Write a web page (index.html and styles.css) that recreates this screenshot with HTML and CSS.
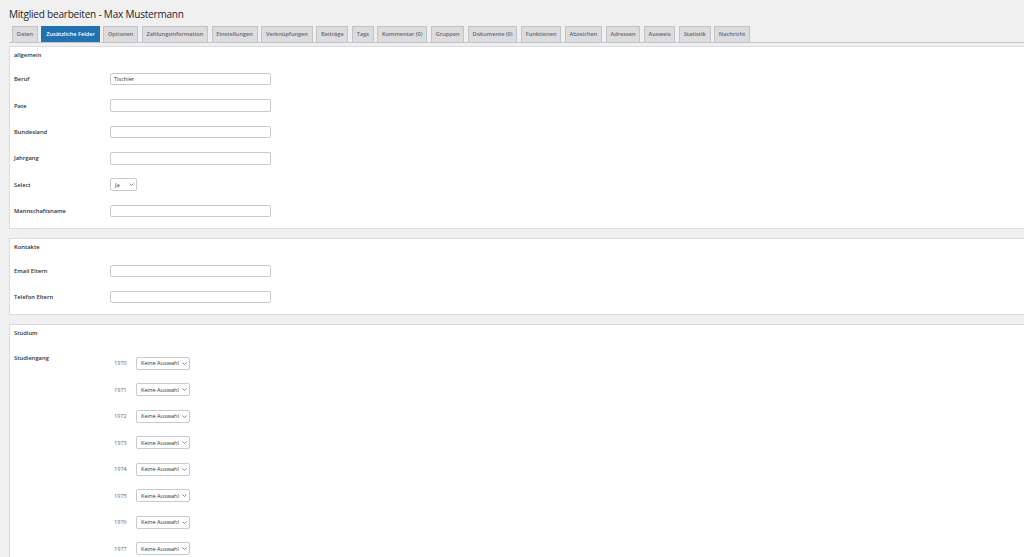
FILE: index.html
```html
<!DOCTYPE html>
<html lang="de">
<head>
<meta charset="utf-8">
<title>Mitglied bearbeiten</title>
<link rel="stylesheet" href="styles.css">
</head>
<body>
<div class="wrap">
  <h1 class="title">Mitglied bearbeiten - Max Mustermann</h1>
  <nav class="tabs">
    <a class="tab">Daten</a>
    <a class="tab active">Zusätzliche Felder</a>
    <a class="tab">Optionen</a>
    <a class="tab">Zahlungsinformation</a>
    <a class="tab">Einstellungen</a>
    <a class="tab">Verknüpfungen</a>
    <a class="tab">Beiträge</a>
    <a class="tab">Tags</a>
    <a class="tab">Kommentar (0)</a>
    <a class="tab">Gruppen</a>
    <a class="tab">Dokumente (0)</a>
    <a class="tab">Funktionen</a>
    <a class="tab">Abzeichen</a>
    <a class="tab">Adressen</a>
    <a class="tab">Ausweis</a>
    <a class="tab">Statistik</a>
    <a class="tab">Nachricht</a>
  </nav>

  <section class="panel">
    <h2 class="panel-title">allgemein</h2>
    <div class="rows">
      <div class="row"><span class="label">Beruf</span><div class="input">Tischler</div></div>
      <div class="row"><span class="label">Pate</span><div class="input"></div></div>
      <div class="row"><span class="label">Bundesland</span><div class="input"></div></div>
      <div class="row"><span class="label">Jahrgang</span><div class="input"></div></div>
      <div class="row"><span class="label">Select</span><div class="select select-small"><span>Ja</span><svg class="chev" viewBox="0 0 10 6"><path d="M1 1l4 4 4-4"/></svg></div></div>
      <div class="row"><span class="label">Mannschaftsname</span><div class="input"></div></div>
    </div>
  </section>

  <section class="panel">
    <h2 class="panel-title">Kontakte</h2>
    <div class="rows">
      <div class="row"><span class="label">Email Eltern</span><div class="input"></div></div>
      <div class="row"><span class="label">Telefon Eltern</span><div class="input"></div></div>
    </div>
  </section>

  <section class="panel panel-last">
    <h2 class="panel-title">Studium</h2>
    <div class="rows">
      <div class="row-top">
        <span class="label label-top">Studiengang</span>
        <div class="years">
          <div class="year-row"><span class="year">1970</span><div class="select select-wide"><span>Keine Auswahl</span><svg class="chev" viewBox="0 0 10 6"><path d="M1 1l4 4 4-4"/></svg></div></div>
          <div class="year-row"><span class="year">1971</span><div class="select select-wide"><span>Keine Auswahl</span><svg class="chev" viewBox="0 0 10 6"><path d="M1 1l4 4 4-4"/></svg></div></div>
          <div class="year-row"><span class="year">1972</span><div class="select select-wide"><span>Keine Auswahl</span><svg class="chev" viewBox="0 0 10 6"><path d="M1 1l4 4 4-4"/></svg></div></div>
          <div class="year-row"><span class="year">1973</span><div class="select select-wide"><span>Keine Auswahl</span><svg class="chev" viewBox="0 0 10 6"><path d="M1 1l4 4 4-4"/></svg></div></div>
          <div class="year-row"><span class="year">1974</span><div class="select select-wide"><span>Keine Auswahl</span><svg class="chev" viewBox="0 0 10 6"><path d="M1 1l4 4 4-4"/></svg></div></div>
          <div class="year-row"><span class="year">1975</span><div class="select select-wide"><span>Keine Auswahl</span><svg class="chev" viewBox="0 0 10 6"><path d="M1 1l4 4 4-4"/></svg></div></div>
          <div class="year-row"><span class="year">1976</span><div class="select select-wide"><span>Keine Auswahl</span><svg class="chev" viewBox="0 0 10 6"><path d="M1 1l4 4 4-4"/></svg></div></div>
          <div class="year-row"><span class="year">1977</span><div class="select select-wide"><span>Keine Auswahl</span><svg class="chev" viewBox="0 0 10 6"><path d="M1 1l4 4 4-4"/></svg></div></div>
        </div>
      </div>
    </div>
  </section>
</div>
</body>
</html>
```

FILE: styles.css
```css
html, body {
  margin: 0;
  padding: 0;
  background: #f0f0f0;
}
body {
  width: 1024px;
  height: 557px;
  overflow: hidden;
  font-family: "Open Sans", "Noto Sans", sans-serif;
  color: #1d2327;
}
.wrap {
  padding-left: 9px;
}
.title {
  margin: 0;
  padding-top: 7px;
  height: 14px;
  line-height: 14px;
  font-size: 10px;
  letter-spacing: -0.2px;
  font-weight: 400;
  color: #1d2327;
}
.tabs {
  display: flex;
  gap: 3.5px;
  margin-top: 4.5px;
  padding-left: 3px;
  border-bottom: 1px solid #c3c4c7;
}
.tab {
  box-sizing: border-box;
  height: 16px;
  line-height: 15px;
  padding: 0 3.8px;
  border: 1px solid #c3c4c7;
  border-bottom: none;
  background: #dcdcde;
  color: #646970;
  font-size: 5.6px;
  font-weight: 600;
  white-space: nowrap;
}
.tab.active {
  background: #2271b1;
  border-color: #2271b1;
  color: #fff;
}
.panel {
  background: #fff;
  border: 1px solid #dcdcde;
  border-right: none;
  margin-top: 3.5px;
  padding: 3px 0 4px 4px;
}
.panel + .panel {
  margin-top: 8.3px;
}
.panel-title {
  margin: 0;
  font-size: 5.8px;
  font-weight: 600;
  line-height: 10px;
  color: #2c3338;
}
.rows {
  margin-top: 6px;
}
.row {
  display: flex;
  align-items: center;
  height: 26.4px;
}
.label {
  width: 96px;
  flex: none;
  font-size: 5.8px;
  font-weight: 600;
  color: #2c3338;
}
.input {
  box-sizing: border-box;
  width: 161px;
  height: 12.5px;
  border: 1px solid #c8cacd;
  border-radius: 2px;
  padding: 0 3px;
  font-size: 5.6px;
  line-height: 10.5px;
  color: #2c3338;
}
.select {
  box-sizing: border-box;
  display: flex;
  align-items: center;
  justify-content: space-between;
  height: 13px;
  border: 1px solid #c8cacd;
  border-radius: 2px;
  padding: 0 2.5px 0 4px;
  font-size: 5.6px;
  color: #2c3338;
}
.select-small {
  width: 27px;
}
.select-wide {
  width: 54px;
}
.chev {
  width: 5px;
  height: 3px;
  fill: none;
  stroke: #50575e;
  stroke-width: 1.4;
}
.row-top {
  display: flex;
  align-items: flex-start;
}
.label-top {
  line-height: 28px;
}
.years {
  margin-top: 6.5px;
}
.year-row {
  display: flex;
  align-items: center;
  height: 26.5px;
}
.year {
  width: 22px;
  padding-left: 4px;
  font-size: 5.6px;
  color: #646970;
}
```
